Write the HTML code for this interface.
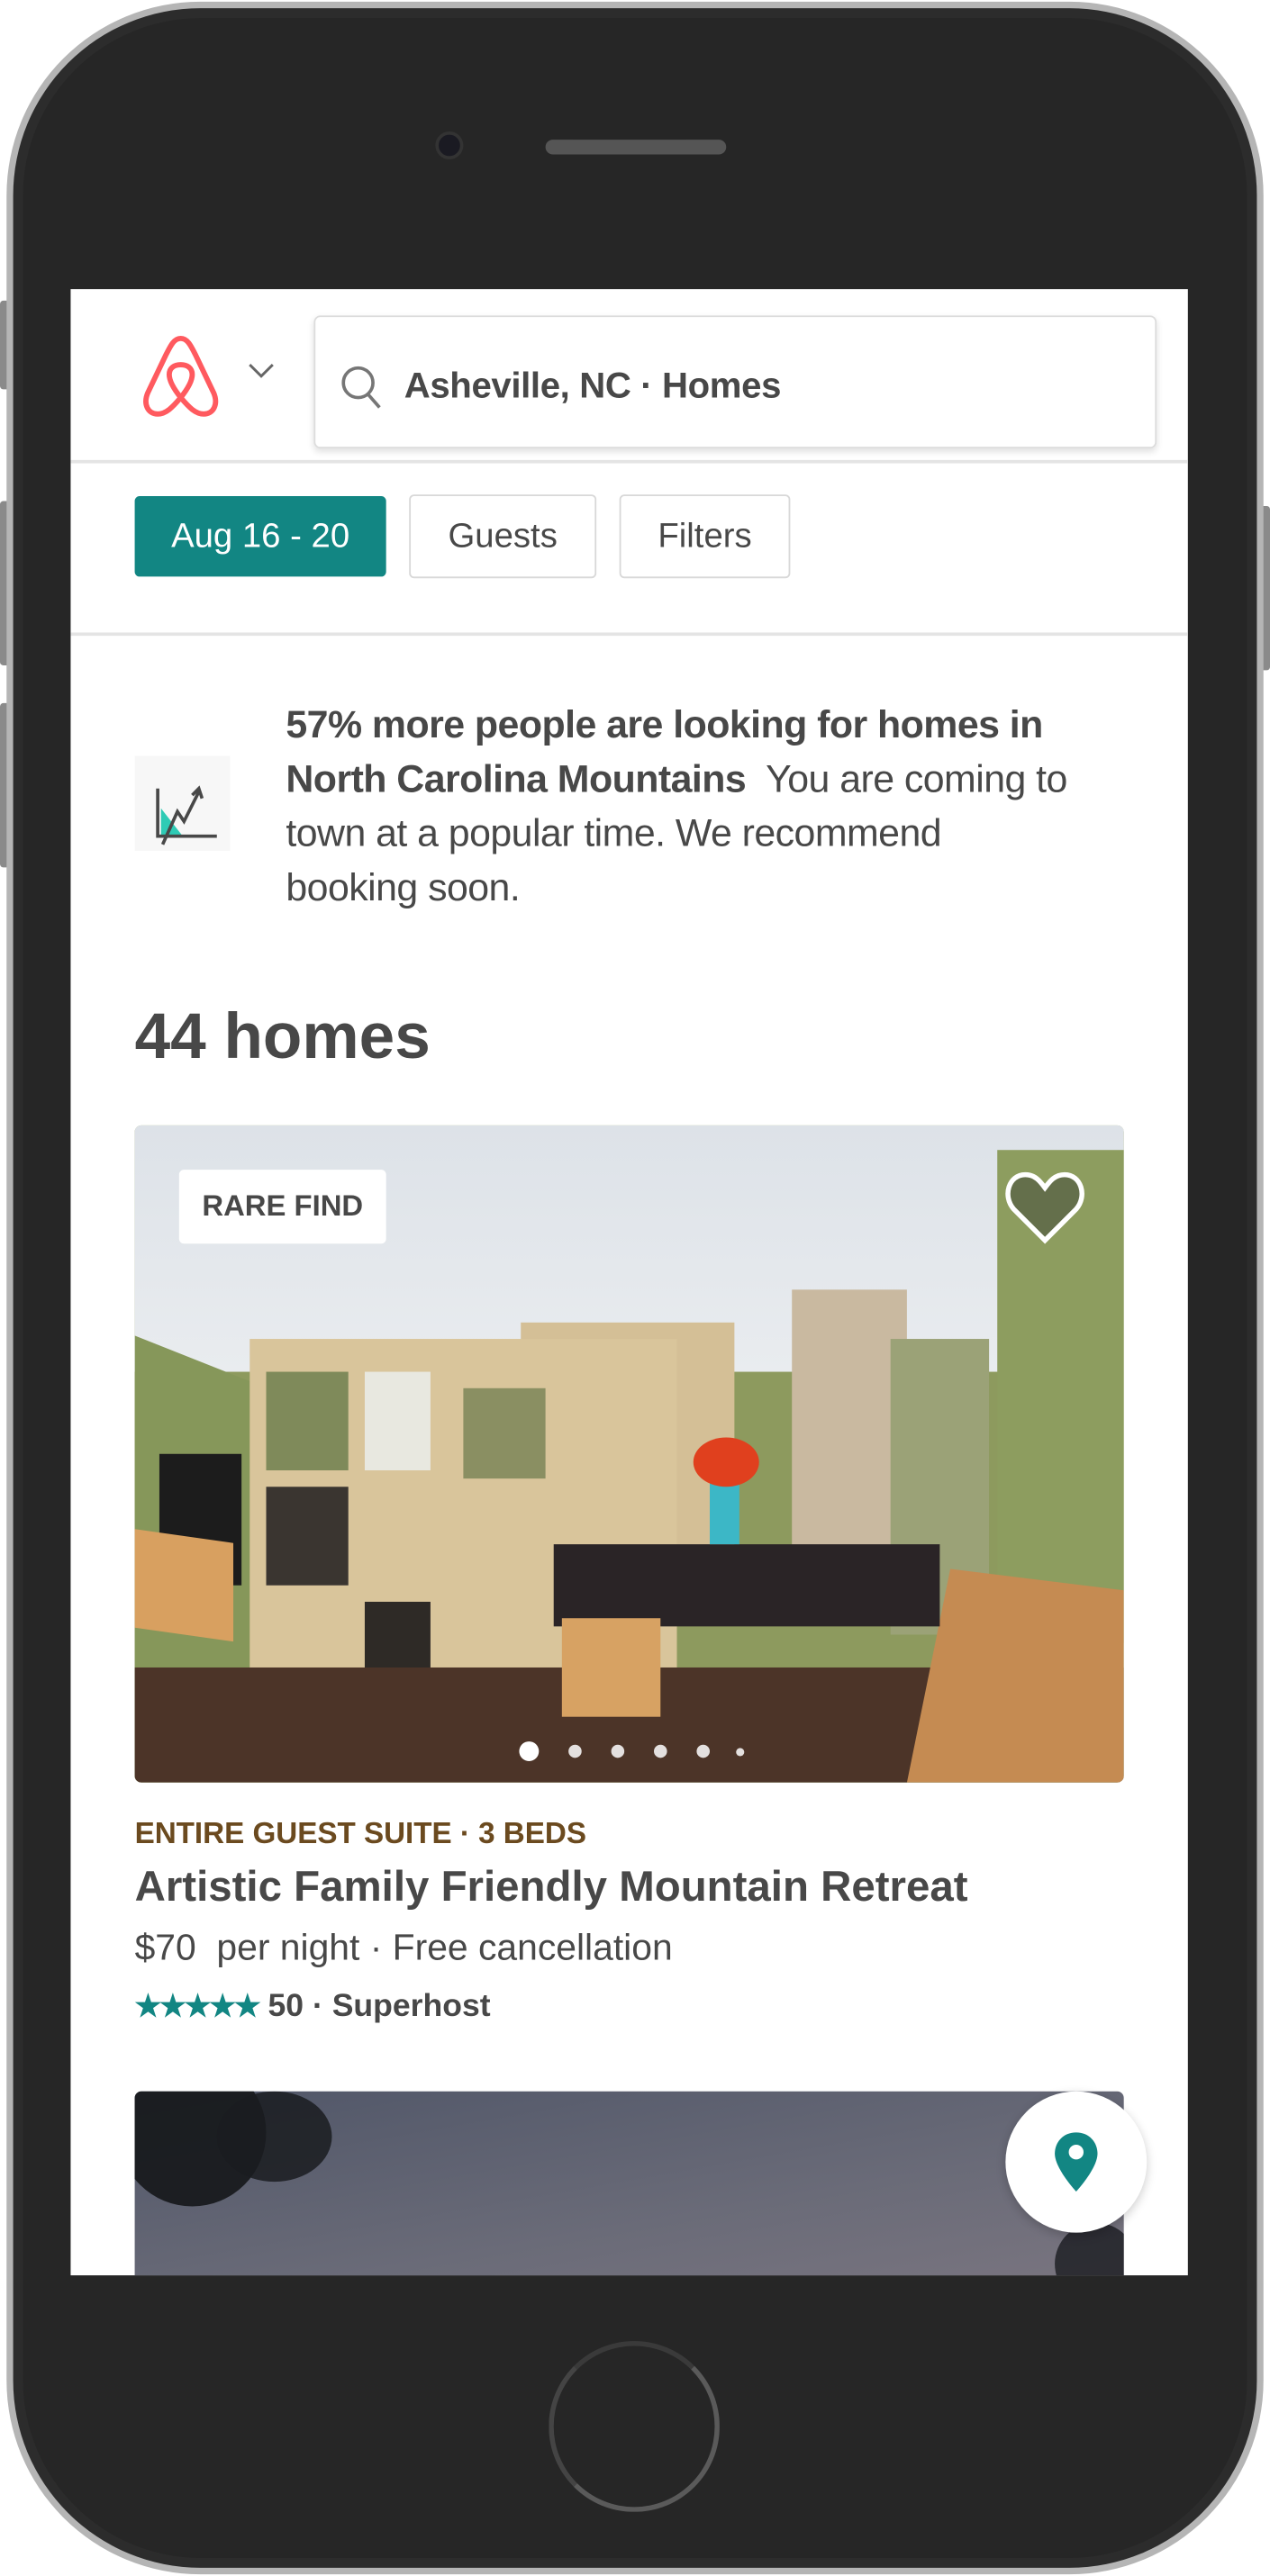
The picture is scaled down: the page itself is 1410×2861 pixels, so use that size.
<!DOCTYPE html>
<html><head><meta charset="utf-8"><style>
*{margin:0;padding:0;box-sizing:border-box}
html,body{width:1410px;height:2861px;overflow:hidden;background:#fff}
#w{position:absolute;left:0;top:0;width:773px;height:1568px;transform-origin:0 0;transform:scale(1.8241,1.8246);font-family:"Liberation Sans",sans-serif}
.a{position:absolute}
.btn{position:absolute;border:1px solid #d8d8d8;border-radius:3px;background:#fff;color:#484848;font-size:21px;display:flex;align-items:center;justify-content:center}
</style></head><body><div id="w">
<div class="a" style="left:0;top:183px;width:6px;height:54px;background:#8a8a8a;border-radius:2px"></div>
<div class="a" style="left:0;top:305px;width:6px;height:100px;background:#8a8a8a;border-radius:2px"></div>
<div class="a" style="left:0;top:428px;width:6px;height:100px;background:#8a8a8a;border-radius:2px"></div>
<div class="a" style="left:767px;top:308px;width:6px;height:100px;background:#8a8a8a;border-radius:2px"></div>
<div class="a" style="left:4px;top:1px;width:765px;height:1566px;border-radius:118px;background:#b5b5b5"></div>
<div class="a" style="left:8px;top:5px;width:757px;height:1558px;border-radius:114px;background:#2c2c2c"></div>
<div class="a" style="left:14px;top:11px;width:745px;height:1546px;border-radius:108px;background:#262626"></div>
<div class="a" style="left:265px;top:80px;width:17px;height:17px;border-radius:50%;background:#1a1a22;border:2px solid #333"></div>
<div class="a" style="left:332px;top:85px;width:110px;height:9px;border-radius:5px;background:#555"></div>
<div class="a" style="left:334px;top:1425px;width:104px;height:104px;border-radius:50%;border:3px solid #5a5a5a;border-top-color:#3a3a3a;border-left-color:#444"></div>
<div class="a" style="left:43px;top:176px;width:680px;height:1209px;background:#fff;overflow:hidden">
 <svg class="a" style="left:42px;top:27px" width="50" height="52" viewBox="0 0 50 52"><path d="M25 3C21 3 19 7 16 13L5 36C2 43 5 49 11 49C16 49 20 45 25 39C30 45 34 49 39 49C45 49 48 43 45 36L34 13C31 7 29 3 25 3Z M25 39C21 34 18 29 18 25C18 21 21 19 25 19C29 19 32 21 32 25C32 29 29 34 25 39Z" fill="none" stroke="#ff5a5f" stroke-width="3.2" stroke-linejoin="round"/></svg>
 <svg class="a" style="left:108px;top:45px" width="16" height="10"><path d="M1 1L8 8L15 1" fill="none" stroke="#666" stroke-width="1.6"/></svg>
 <div class="a" style="left:148px;top:16px;width:513px;height:81px;border:1px solid #dcdcdc;border-radius:4px;box-shadow:0 2px 4px rgba(0,0,0,.12)"></div>
 <svg class="a" style="left:164px;top:46px" width="26" height="28"><circle cx="11" cy="11" r="9" fill="none" stroke="#767676" stroke-width="2"/><path d="M17 18L24 26" stroke="#767676" stroke-width="2"/></svg>
 <div class="a" style="left:203px;top:46px;font-size:22px;font-weight:bold;color:#484848;letter-spacing:-.2px">Asheville, NC · Homes</div>
 <div class="a" style="left:0;top:104px;width:680px;height:2px;background:#e4e4e4"></div>
 <div class="btn" style="left:39px;top:126px;width:153px;height:49px;background:#128683;border-color:#128683;color:#fff">Aug 16 - 20</div>
 <div class="btn" style="left:206px;top:125px;width:114px;height:51px">Guests</div>
 <div class="btn" style="left:334px;top:125px;width:104px;height:51px">Filters</div>
 <div class="a" style="left:0;top:209px;width:680px;height:2px;background:#e4e4e4"></div>
 <svg class="a" style="left:39px;top:284px" width="58" height="58"><rect width="58" height="58" fill="#f7f7f7"/><path d="M16 32L30 50H16Z" fill="#2ecbb5"/><path d="M14 26V56M13 55H50" stroke="#484848" stroke-width="2" fill="none" transform="translate(0,-6)"/><path d="M17 54L26 34L30 40L39 22" stroke="#484848" stroke-width="2" fill="none"/><path d="M35 24L39 20L41 26" stroke="#484848" stroke-width="2" fill="none"/></svg>
 <div class="a" style="left:131px;top:249px;width:482px;font-size:23.5px;line-height:33px;color:#484848;letter-spacing:-.3px"><b>57% more people are looking for homes in North Carolina Mountains</b>&nbsp; You are coming to town at a popular time. We recommend booking soon.</div>
 <div class="a" style="left:39px;top:434px;font-size:39px;font-weight:bold;color:#484848">44 homes</div>
 <div class="a" style="left:39px;top:509px;width:602px;height:400px;border-radius:4px;overflow:hidden;background:#8d9a5e">
  <div class="a" style="left:0;top:0;width:602px;height:150px;background:linear-gradient(#dde2e8,#e9ecef)"></div>
  <div class="a" style="left:0;top:60px;width:300px;height:340px;background:#86975a;clip-path:polygon(0 20%,100% 55%,100% 100%,0 100%)"></div>
  <div class="a" style="left:525px;top:15px;width:77px;height:300px;background:#8d9d5f"></div>
  <div class="a" style="left:15px;top:200px;width:50px;height:80px;background:#1c1c1c"></div>
  <div class="a" style="left:235px;top:120px;width:130px;height:140px;background:#d4bf96"></div>
  <div class="a" style="left:70px;top:130px;width:260px;height:270px;background:#d9c59b"></div>
  <div class="a" style="left:80px;top:150px;width:50px;height:60px;background:#7f8a5a"></div>
  <div class="a" style="left:140px;top:150px;width:40px;height:60px;background:#e8e8e0"></div>
  <div class="a" style="left:200px;top:160px;width:50px;height:55px;background:#8a8f62"></div>
  <div class="a" style="left:80px;top:220px;width:50px;height:60px;background:#3a3530"></div>
  <div class="a" style="left:140px;top:290px;width:40px;height:60px;background:#2e2a26"></div>
  <div class="a" style="left:400px;top:100px;width:70px;height:200px;background:#c9b9a0"></div>
  <div class="a" style="left:460px;top:130px;width:60px;height:180px;background:#9ba277"></div>
  <div class="a" style="left:0;top:330px;width:602px;height:70px;background:#4c3428"></div>
  <div class="a" style="left:470px;top:270px;width:132px;height:130px;background:#c58b52;clip-path:polygon(20% 0,100% 10%,100% 100%,0 100%)"></div>
  <div class="a" style="left:255px;top:255px;width:235px;height:50px;background:#2a2426"></div>
  <div class="a" style="left:350px;top:215px;width:18px;height:40px;background:#3cb7c6"></div>
  <div class="a" style="left:340px;top:190px;width:40px;height:30px;border-radius:50%;background:#e0401e"></div>
  <div class="a" style="left:0;top:250px;width:60px;height:60px;background:#d8a060;transform:skewY(8deg)"></div>
  <div class="a" style="left:260px;top:300px;width:60px;height:60px;background:#d7a263"></div>
  <div class="a" style="left:27px;top:27px;width:126px;height:45px;background:#fff;border-radius:3px;font-size:18px;font-weight:bold;color:#484848;display:flex;align-items:center;justify-content:center">RARE FIND</div>
  <svg class="a" style="left:529px;top:27px" width="50" height="46" viewBox="0 0 50 46"><path d="M25 43L6 24C-1 16 3 3 13 3C19 3 22 7 25 11C28 7 31 3 37 3C47 3 51 16 44 24Z" fill="rgba(90,100,70,.8)" stroke="#fff" stroke-width="3"/></svg>
  <div class="a" style="left:234px;top:375px;width:12px;height:12px;border-radius:50%;background:#fff"></div>
  <div class="a" style="left:264px;top:377px;width:8px;height:8px;border-radius:50%;background:#fff;opacity:.85"></div>
  <div class="a" style="left:290px;top:377px;width:8px;height:8px;border-radius:50%;background:#fff;opacity:.85"></div>
  <div class="a" style="left:316px;top:377px;width:8px;height:8px;border-radius:50%;background:#fff;opacity:.85"></div>
  <div class="a" style="left:342px;top:377px;width:8px;height:8px;border-radius:50%;background:#fff;opacity:.85"></div>
  <div class="a" style="left:366px;top:379px;width:5px;height:5px;border-radius:50%;background:#fff;opacity:.85"></div>
 </div>
 <div class="a" style="left:39px;top:930px;font-size:18.2px;font-weight:bold;color:#6b4a1f">ENTIRE GUEST SUITE · 3 BEDS</div>
 <div class="a" style="left:39px;top:957px;font-size:26px;font-weight:bold;color:#484848">Artistic Family Friendly Mountain Retreat</div>
 <div class="a" style="left:39px;top:997px;font-size:22.4px;color:#484848">$70&nbsp; per night · Free cancellation</div>
 <div class="a" style="left:39px;top:1034px;font-size:19.5px;color:#484848;font-weight:bold"><span style="color:#128683;font-size:18px;letter-spacing:-1px">★★★★★</span> 50 · Superhost</div>
 <div class="a" style="left:39px;top:1097px;width:602px;height:120px;border-radius:4px 4px 0 0;overflow:hidden;background:linear-gradient(170deg,#505668,#6a6b78 60%,#7a7580)">
  <div class="a" style="left:-10px;top:-20px;width:90px;height:90px;border-radius:50%;background:#15171a;opacity:.9"></div>
  <div class="a" style="left:50px;top:0;width:70px;height:55px;border-radius:50%;background:#1a1c20;opacity:.85"></div>
  <div class="a" style="left:560px;top:80px;width:50px;height:50px;border-radius:50%;background:#1a1c20;opacity:.8"></div>
 </div>
 <div class="a" style="left:569px;top:1097px;width:86px;height:86px;border-radius:50%;background:#fff;box-shadow:0 2px 6px rgba(0,0,0,.2)"></div>
 <svg class="a" style="left:597px;top:1120px" width="30" height="40" viewBox="0 0 30 40"><path d="M15 2C7 2 2 8 2 15C2 24 15 38 15 38C15 38 28 24 28 15C28 8 23 2 15 2Z" fill="#128683"/><circle cx="15" cy="14" r="4.5" fill="#fff"/></svg>
</div>
</div></body></html>
